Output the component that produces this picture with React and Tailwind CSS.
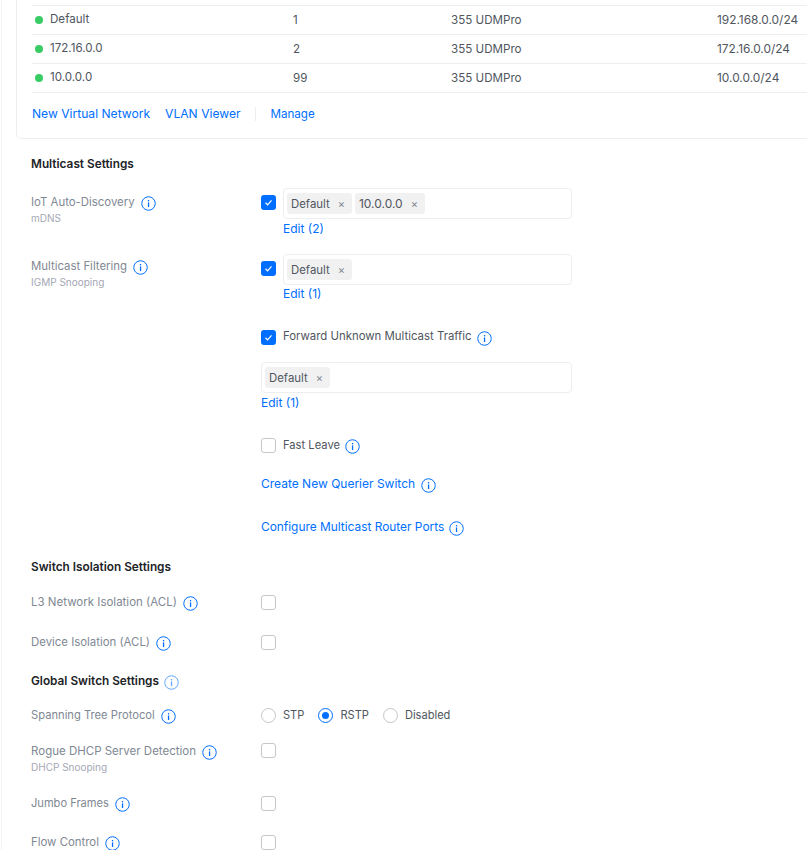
const networks = [
  { name: "Default", vlan: "1", device: "355 UDMPro", subnet: "192.168.0.0/24" },
  { name: "172.16.0.0", vlan: "2", device: "355 UDMPro", subnet: "172.16.0.0/24" },
  { name: "10.0.0.0", vlan: "99", device: "355 UDMPro", subnet: "10.0.0.0/24" },
];

function Info({ light, className = "" }) {
  return (
    <svg width="15" height="15" viewBox="0 0 15 15" fill="none" className={`shrink-0 translate-y-px ${light ? "opacity-60" : ""} ${className}`}>
      <circle cx="7.5" cy="7.5" r="6.75" stroke="#006fff" strokeWidth="1" />
      <rect x="6.9" y="6.4" width="1.3" height="4.6" fill="#006fff" />
      <rect x="6.9" y="4" width="1.3" height="1.4" fill="#006fff" />
    </svg>
  );
}

function Checkbox({ checked }) {
  if (checked) {
    return (
      <span className="flex h-[15px] w-[15px] shrink-0 items-center justify-center rounded-[3px] bg-[#006fff]">
        <svg width="9" height="9" viewBox="0 0 9 9" fill="none">
          <path d="M1.5 4.8 L3.6 6.8 L7.5 2.4" stroke="#fff" strokeWidth="1.2" />
        </svg>
      </span>
    );
  }
  return <span className="block h-[15px] w-[15px] shrink-0 rounded-[3px] border border-[#c4c6ca] bg-white" />;
}

function Radio({ checked }) {
  if (checked) {
    return (
      <span className="flex h-[15px] w-[15px] shrink-0 items-center justify-center rounded-full border border-[#006fff]">
        <span className="h-[7px] w-[7px] rounded-full bg-[#006fff]" />
      </span>
    );
  }
  return <span className="block h-[15px] w-[15px] shrink-0 rounded-full border border-[#c4c6ca]" />;
}

function TagBox({ tags, className = "w-[289px]" }) {
  return (
    <div className={`flex h-[31px] items-center gap-[3px] rounded-[4px] border border-[#edeeef] pl-[3px] ${className}`}>
      {tags.map((t) => (
        <span key={t} className={`flex h-[21px] items-center rounded-[3px] bg-[#f1f1f2] pl-[4px] pr-[7px] text-[#50565e] ${t === "10.0.0.0" ? "text-[12px]" : ""}`}>
          {t}
          <span className="ml-[8px] text-[11px] text-[#808893]">×</span>
        </span>
      ))}
    </div>
  );
}

function Label({ text, sub, className = "" }) {
  return (
    <div className="w-[230px] shrink-0">
      <div className={`flex items-center gap-[6px] text-[#808893] ${className}`}>
        {text}
        <Info />
      </div>
      {sub && <div className="text-[10px] leading-[14px] text-[#a4a7b5]">{sub}</div>}
    </div>
  );
}

function Heading({ text, info, className = "" }) {
  return (
    <div className={`flex h-[18px] items-center gap-[5px] text-[11.8px] font-semibold text-[#212327] ${className}`}>
      {text}
      {info && <Info light />}
    </div>
  );
}

export default function App() {
  return (
    <div className="h-[850px] w-[807px] overflow-hidden bg-white font-['Inter',sans-serif] text-[11.4px] leading-[18px] text-[#50565e]">
      <div className="ml-[1px] border-l border-[#f4f4f5]">
        <div className="ml-[14px] h-[139px] rounded-bl-[5px] border-b border-l border-[#edeeef] pl-[15px] pt-[5px]">
          <div className="border-t border-[#edeeef]">
            {networks.map((n) => (
              <div key={n.name} className="grid h-[29px] grid-cols-[261px_158px_266px_1fr] items-center border-b border-[#edeeef] text-[11.6px]">
                <div className="flex items-center pl-[3px]">
                  <span className="h-[8px] w-[8px] rounded-full bg-[#38cc65]" />
                  <span className="ml-[7px] -translate-y-px">{n.name}</span>
                </div>
                <div>{n.vlan}</div>
                <div>{n.device}</div>
                <div className="text-[11.9px]">{n.subnet}</div>
              </div>
            ))}
          </div>
          <div className="flex h-[41px] items-center text-[12.1px] text-[#006fff]">
            <span>New Virtual Network</span>
            <span className="ml-[15px]">VLAN Viewer</span>
            <span className="ml-[14px] h-[14px] w-px bg-[#edeeef]" />
            <span className="ml-[15px] text-[11.6px]">Manage</span>
          </div>
        </div>

        <div className="pl-[29px]">
          <Heading text="Multicast Settings" className="mt-[16px]" />

          <div className="mt-[15px] flex">
            <div className="mt-[5px]"><Label text="IoT Auto-Discovery" sub="mDNS" /></div>
            <div className="flex">
              <div className="mt-[7px] mr-[7px]"><Checkbox checked /></div>
              <div>
                <TagBox tags={["Default", "10.0.0.0"]} />
                <div className="mt-[1px] text-[12px] text-[#006fff]">Edit (2)</div>
              </div>
            </div>
          </div>

          <div className="mt-[16px] flex">
            <div className="mt-[3px]"><Label text="Multicast Filtering" sub="IGMP Snooping" /></div>
            <div className="flex">
              <div className="mt-[7px] mr-[7px]"><Checkbox checked /></div>
              <div>
                <TagBox tags={["Default"]} />
                <div className="text-[12px] text-[#006fff]">Edit (1)</div>
              </div>
            </div>
          </div>

          <div className="ml-[230px] mt-[25px] flex items-center gap-[7px]">
            <Checkbox checked />
            <span className="-translate-y-px">Forward Unknown Multicast Traffic</span>
            <Info className="-ml-[2px]" />
          </div>
          <TagBox tags={["Default"]} className="ml-[230px] mt-[16px] w-[311px]" />
          <div className="ml-[230px] mt-[1px] text-[12px] text-[#006fff]">Edit (1)</div>

          <div className="ml-[230px] mt-[24px] flex items-center gap-[7px]">
            <Checkbox />
            <span className="text-[11.2px]">Fast Leave</span>
            <Info className="-ml-[2px]" />
          </div>
          <div className="ml-[230px] mt-[21px] flex items-center gap-[6px] text-[12px] text-[#006fff]">
            Create New Querier Switch <Info />
          </div>
          <div className="ml-[230px] mt-[25px] flex items-center gap-[5px] text-[11.9px] text-[#006fff]">
            Configure Multicast Router Ports <Info />
          </div>

          <Heading text="Switch Isolation Settings" className="mt-[22px]" />
          <div className="mt-[17px] flex items-center">
            <Label text="L3 Network Isolation (ACL)" className="text-[11.5px]" />
            <Checkbox />
          </div>
          <div className="mt-[22px] flex items-center">
            <Label text="Device Isolation (ACL)" />
            <Checkbox />
          </div>

          <Heading text="Global Switch Settings" info className="mt-[21px]" />
          <div className="mt-[16px] flex items-center">
            <Label text="Spanning Tree Protocol" className="text-[11.2px]" />
            <div className="flex items-center text-[11.1px]">
              <Radio />
              <span className="ml-[7px]">STP</span>
              <span className="ml-[14px]"><Radio checked /></span>
              <span className="ml-[7px]">RSTP</span>
              <span className="ml-[14px]"><Radio /></span>
              <span className="ml-[7px]">Disabled</span>
            </div>
          </div>
          <div className="mt-[18px] flex">
            <Label text="Rogue DHCP Server Detection" sub="DHCP Snooping" className="text-[11.5px]" />
            <div className="mt-[1px]"><Checkbox /></div>
          </div>
          <div className="mt-[20px] flex items-center">
            <Label text="Jumbo Frames" className="text-[11.1px]" />
            <Checkbox />
          </div>
          <div className="mt-[21px] flex items-center">
            <Label text="Flow Control" />
            <Checkbox />
          </div>
        </div>
      </div>
    </div>
  );
}
